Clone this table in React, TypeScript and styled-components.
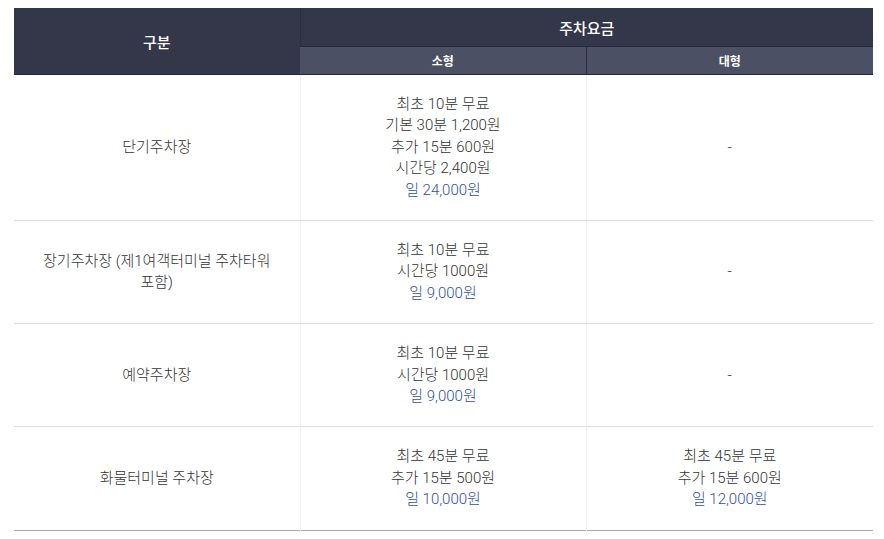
import styled, { createGlobalStyle } from "styled-components"

const GlobalStyle = createGlobalStyle`
  body {
    margin: 0;
    background: #fff;
    font-family: Roboto, "Noto Sans CJK KR", sans-serif;
    color: #333;
  }
`

const Wrap = styled.div`
  padding: 8px 11px 0 14px;
`

const Table = styled.table`
  width: 859px;
  border-collapse: collapse;
  table-layout: fixed;
  font-size: 15px;
  font-weight: 300;
  border-bottom: 1px solid #aaa;
`

const Th = styled.th<{ $sub?: boolean }>`
  background: ${(p) => (p.$sub ? "#4b5064" : "#34364a")};
  color: #fff;
  font-weight: ${(p) => (p.$sub ? 700 : 500)};
  font-size: ${(p) => (p.$sub ? "12px" : "15px")};
  height: ${(p) => (p.$sub ? "27px" : "38px")};
  padding: 0;
  border-left: 1px solid #2c2e40;
  border-bottom: 1px solid #24263a;

  &:first-child {
    border-left: none;
  }
`

const Td = styled.td`
  text-align: center;
  vertical-align: middle;
  padding: 19px 20px;
  line-height: 21.4px;
  word-break: keep-all;
  border-left: 1px solid #eee;
  border-top: 1px solid #ddd;

  &:first-child {
    border-left: none;
  }
`

const Line = styled.div<{ $day?: boolean }>`
  color: ${(p) => (p.$day ? "#34509a" : "#333")};
`

type Row = { name: string; small: string[]; large: string[] }

const rows: Row[] = [
  {
    name: "단기주차장",
    small: ["최초 10분 무료", "기본 30분 1,200원", "추가 15분 600원", "시간당 2,400원", "일 24,000원"],
    large: [],
  },
  {
    name: "장기주차장 (제1여객터미널 주차타워 포함)",
    small: ["최초 10분 무료", "시간당 1000원", "일 9,000원"],
    large: [],
  },
  {
    name: "예약주차장",
    small: ["최초 10분 무료", "시간당 1000원", "일 9,000원"],
    large: [],
  },
  {
    name: "화물터미널 주차장",
    small: ["최초 45분 무료", "추가 15분 500원", "일 10,000원"],
    large: ["최초 45분 무료", "추가 15분 600원", "일 12,000원"],
  },
]

const Fees = ({ lines }: { lines: string[] }) => {
  if (lines.length === 0) return <>-</>
  return (
    <>
      {lines.map((l) => (
        <Line key={l} $day={l.startsWith("일 ")}>
          {l}
        </Line>
      ))}
    </>
  )
}

const App = () => {
  return (
    <Wrap>
      <GlobalStyle />
      <Table>
        <colgroup>
          <col style={{ width: 286 }} />
          <col style={{ width: 286 }} />
          <col style={{ width: 287 }} />
        </colgroup>
        <thead>
          <tr>
            <Th rowSpan={2}>구분</Th>
            <Th colSpan={2}>주차요금</Th>
          </tr>
          <tr>
            <Th $sub>소형</Th>
            <Th $sub>대형</Th>
          </tr>
        </thead>
        <tbody>
          {rows.map((r) => (
            <tr key={r.name}>
              <Td>{r.name}</Td>
              <Td>
                <Fees lines={r.small} />
              </Td>
              <Td>
                <Fees lines={r.large} />
              </Td>
            </tr>
          ))}
        </tbody>
      </Table>
    </Wrap>
  )
}

export default App
